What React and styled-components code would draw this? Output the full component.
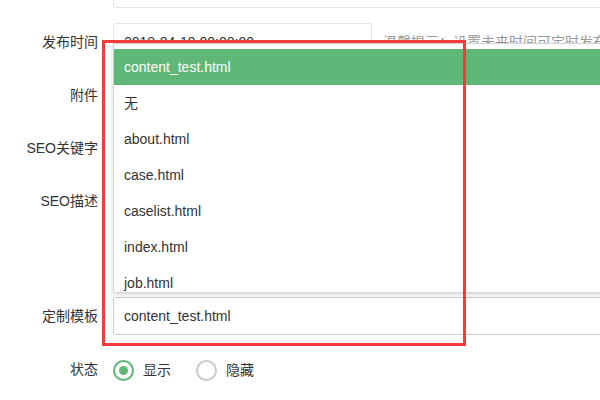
import React from 'react'
import styled, { createGlobalStyle } from 'styled-components'

const GlobalStyle = createGlobalStyle`
  body {
    margin: 0;
    overflow: hidden;
    background: #fff;
    color: #333;
    font-family: "Liberation Sans", "Noto Sans CJK SC", sans-serif;
    font-size: 14px;
  }
`;

const Page = styled.div`
  position: relative;
  width: 760px;
  margin-top: -30px;
  padding-left: 3px;
`;

const FormItem = styled.div`
  display: flex;
  align-items: flex-start;
  margin-bottom: 15px;
`;

const Label = styled.label`
  flex: none;
  width: 80px;
  padding: 9px 15px;
  line-height: 20px;
  text-align: right;
  white-space: nowrap;
`;

const InputBlock = styled.div`
  flex: 1;
  position: relative;
`;

const InputInline = styled.div`
  flex: none;
  width: 259px;
  margin-right: 11px;
`;

const Aux = styled.div`
  padding: 9px 0;
  line-height: 20px;
  color: #999;
  white-space: nowrap;
`;

const Input = styled.input`
  display: block;
  box-sizing: border-box;
  width: 100%;
  height: 38px;
  padding-left: 10px;
  border: 1px solid ${p => (p.$open ? '#cdcdcd' : '#e6e6e6')};
  border-radius: 2px;
  background: #fff;
  color: #333;
  font: inherit;
  outline: none;
`;

const TextArea = styled.textarea`
  display: block;
  box-sizing: border-box;
  width: 100%;
  height: 100px;
  padding: 6px 10px;
  border: 1px solid #e6e6e6;
  border-radius: 2px;
  font: inherit;
  resize: none;
`;

const Dropdown = styled.dl`
  position: absolute;
  left: 0;
  right: 0;
  bottom: 42px;
  z-index: 5;
  box-sizing: border-box;
  height: 250px;
  margin: 0;
  padding: 5px 0;
  overflow: hidden;
  background: #fff;
  border: 1px solid #d2d2d2;
  border-radius: 2px;
  box-shadow: 0 2px 4px rgba(0, 0, 0, 0.14);
`;

const Option = styled.dd`
  margin: 0;
  padding: 0 10px;
  line-height: 36px;
  white-space: nowrap;
  background: ${p => (p.$active ? '#5fb878' : '#fff')};
  color: ${p => (p.$active ? '#fff' : '#333')};
`;

const RadioGroup = styled.div`
  display: flex;
  align-items: center;
  margin-top: 6px;
  height: 28px;
`;

const Radio = styled.span`
  display: flex;
  align-items: center;
  margin-right: 25px;
  line-height: 28px;
`;

const RadioIcon = styled.i`
  position: relative;
  box-sizing: border-box;
  width: 21px;
  height: 21px;
  margin-right: 9px;
  border: 2px solid ${p => (p.$checked ? '#5fb878' : '#c9c9c9')};
  border-radius: 50%;

  &::after {
    content: '';
    display: ${p => (p.$checked ? 'block' : 'none')};
    position: absolute;
    left: 4px;
    top: 4px;
    width: 9px;
    height: 9px;
    border-radius: 50%;
    background: #5fb878;
  }
`;

// red annotation frame drawn over the open select
const Marker = styled.div`
  position: absolute;
  left: 102px;
  top: 70px;
  z-index: 10;
  width: 358px;
  height: 300px;
  border: 3px solid #f53c3c;
  pointer-events: none;
`;

const templates = [
  'content_test.html',
  '无',
  'about.html',
  'case.html',
  'caselist.html',
  'index.html',
  'job.html',
  'list.html',
];

export default function App() {
  return (
    <>
      <GlobalStyle />
      <Page>
        <FormItem>
          <Label>作者</Label>
          <InputBlock>
            <Input defaultValue="" />
          </InputBlock>
        </FormItem>

        <FormItem>
          <Label>发布时间</Label>
          <InputInline>
            <Input defaultValue="2018-04-19 00:00:00" />
          </InputInline>
          <Aux>温馨提示：设置未来时间可定时发布</Aux>
        </FormItem>

        <FormItem>
          <Label>附件</Label>
          <InputBlock>
            <Input />
          </InputBlock>
        </FormItem>

        <FormItem>
          <Label>SEO关键字</Label>
          <InputBlock>
            <Input />
          </InputBlock>
        </FormItem>

        <FormItem>
          <Label>SEO描述</Label>
          <InputBlock>
            <TextArea />
          </InputBlock>
        </FormItem>

        <FormItem>
          <Label>定制模板</Label>
          <InputBlock>
            <Input $open readOnly value="content_test.html" />
            <Dropdown>
              {templates.map((t, i) => (
                <Option key={t} $active={i === 0}>{t}</Option>
              ))}
            </Dropdown>
          </InputBlock>
        </FormItem>

        <FormItem>
          <Label>状态</Label>
          <RadioGroup>
            <Radio><RadioIcon $checked />显示</Radio>
            <Radio><RadioIcon />隐藏</Radio>
          </RadioGroup>
        </FormItem>

        <Marker />
      </Page>
    </>
  );
}
